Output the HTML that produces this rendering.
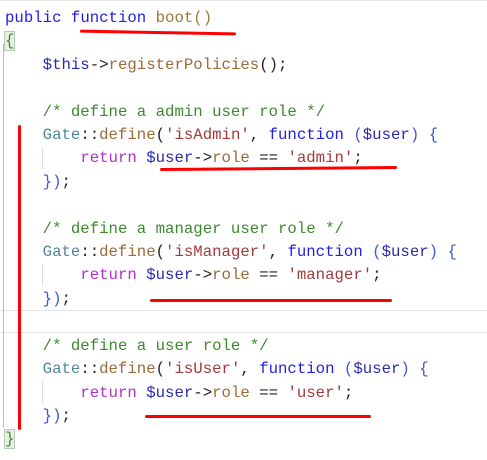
<!DOCTYPE html><html><head><style>
body{margin:0;width:487px;height:460px;background:#fff;position:relative;overflow:hidden}
pre{margin:0;position:absolute;left:5px;top:7px;font-family:"Liberation Mono",monospace;font-size:15.7px;line-height:23.4px;color:#222}
.k{color:#1f1fe6}.f{color:#9a7a3a}.c{color:#3d8a2e}.v{color:#2a2ab0}.r{color:#b030c8}.s{color:#a33a3a}.g{color:#4f8896}.d{color:#9a6b3a}.p{color:#3a5ad0}
.br{background:#e8efe6;outline:1px solid #b8c8b8;color:#3d8a2e}
.red{position:absolute;background:#f00;border-radius:2px}
.sep{position:absolute;left:0;width:487px;height:1px;background:#e6e6e6}
.ig{position:absolute;left:42px;width:1px;height:22px;background:#ddd}
</style></head><body>
<div class="sep" style="top:0"></div>
<div class="sep" style="top:310px"></div>
<div class="sep" style="top:332px"></div>
<div style="position:absolute;left:3px;top:44px;width:1px;height:384px;background:#bbb"></div>
<div class="ig" style="top:147px"></div>
<div class="ig" style="top:264px"></div>
<div class="ig" style="top:381px"></div>
<pre><span class="k">public</span> <span class="k">function</span> <span class="f">boot</span><span class="f">()</span>
<span class="br">{</span>
    <span class="v">$this</span>-&gt;<span class="d">registerPolicies</span>();

    <span class="c">/* define a admin user role */</span>
    <span class="g">Gate</span>::<span class="d">define</span>(<span class="s">'isAdmin'</span>, <span class="k">function</span> <span class="p">(</span><span class="v">$user</span><span class="p">)</span> <span class="p">{</span>
        <span class="r">return</span> <span class="v">$user</span>-&gt;<span class="d">role</span> == <span class="s">'admin'</span>;
    <span class="p">})</span>;

    <span class="c">/* define a manager user role */</span>
    <span class="g">Gate</span>::<span class="d">define</span>(<span class="s">'isManager'</span>, <span class="k">function</span> <span class="p">(</span><span class="v">$user</span><span class="p">)</span> <span class="p">{</span>
        <span class="r">return</span> <span class="v">$user</span>-&gt;<span class="d">role</span> == <span class="s">'manager'</span>;
    <span class="p">})</span>;

    <span class="c">/* define a user role */</span>
    <span class="g">Gate</span>::<span class="d">define</span>(<span class="s">'isUser'</span>, <span class="k">function</span> <span class="p">(</span><span class="v">$user</span><span class="p">)</span> <span class="p">{</span>
        <span class="r">return</span> <span class="v">$user</span>-&gt;<span class="d">role</span> == <span class="s">'user'</span>;
    <span class="p">})</span>;
<span class="br">}</span></pre>
<div class="red" style="left:80px;top:31px;width:156px;height:3px;transform:rotate(1deg)"></div>
<div class="red" style="left:18px;top:125px;width:3px;height:305px"></div>
<div class="red" style="left:160px;top:167px;width:237px;height:3px;transform:rotate(-0.5deg)"></div>
<div class="red" style="left:150px;top:299px;width:242px;height:3px"></div>
<div class="red" style="left:145px;top:415px;width:226px;height:3px"></div>
</body></html>
